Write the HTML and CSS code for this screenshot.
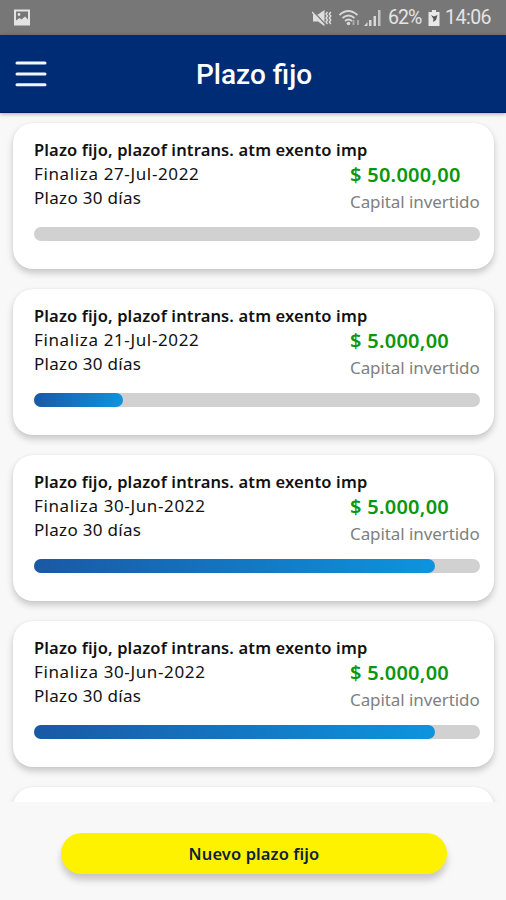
FILE: index.html
```html
<!DOCTYPE html>
<html lang="es">
<head>
<meta charset="utf-8">
<title>Plazo fijo</title>
<link rel="stylesheet" href="styles.css">
</head>
<body>
<div class="status">
  <svg class="photo" width="18" height="17" viewBox="0 0 18 17"><path fill="#e3e3e3" fill-rule="evenodd" d="M1 .5h16v16H1zM3 2.500v9l3.500-2.500 2 1.500 3.500-3 3 3v-8z"/><circle cx="6" cy="5.500" r="1.400" fill="#e3e3e3"/></svg>
  <div class="indicators">
    <svg class="mute" width="20" height="18" viewBox="0 0 20 18"><path fill="#dedede" d="M1 5.500h5L12.500 1v16L6 12.500H1z"/><path d="M1 2l12 13" stroke="#777" stroke-width="1.300"/><path d="M0 3l12 13" stroke="#dedede" stroke-width="1.400"/><path d="M15.500 3L14 5l1.500 2L14 9l1.500 2-1.500 2 1.500 2M18.800 3l-1.500 2 1.500 2-1.500 2 1.500 2-1.500 2 1.500 2" fill="none" stroke="#dedede" stroke-width="1.400"/></svg>
    <svg class="wifi" width="22" height="18" viewBox="0 0 22 18"><g fill="none" stroke="#d8d8d8" stroke-width="1.800"><path d="M.5 6q8.500-8 18 0M3.500 9q6-5 12 0M6 12q3.500-3 7 0"/></g><circle cx="9.500" cy="14.500" r="1.800" fill="#d8d8d8"/><path d="M14.500 11v5M19 11v5" stroke="#aaa" stroke-width="2" fill="none"/></svg>
    <svg class="signal" width="18" height="18" viewBox="0 0 18 18"><path fill="#d8d8d8" d="M0 17l3.500-4v4zM5 11h2.500v6H5zM9.500 7H12v10H9.500z"/><path fill="#c4c4c4" d="M14 1h2.500v16H14z"/></svg>
    <span class="percent">62%</span>
    <svg class="battery" width="12" height="18" viewBox="0 0 12 18"><path fill="#e8e8e8" d="M4 1h4v2h3.500v14H.5V3H4z"/><path fill="#555" d="M3 6l3 1.500L9.500 6 8 11l-3 2 .5-3z"/></svg>
    <span class="clock">14:06</span>
  </div>
</div>
<header class="bar">
  <svg class="menu" width="32" height="28" viewBox="0 0 32 28"><path d="M2 3h28M2 14h28M2 24.800h28" stroke="#f3f5fc" stroke-width="3" stroke-linecap="round"/></svg>
  <h1 class="title">Plazo fijo</h1>
</header>
<main class="list">
  <article class="card">
    <h2 class="name">Plazo fijo, plazof intrans. atm exento imp</h2>
    <div class="info">
      <div class="term"><p class="ends">Finaliza 27-Jul-2022</p><p class="days">Plazo 30 días</p></div>
      <div class="capital"><p class="amount">$ 50.000,00</p><p class="caption">Capital invertido</p></div>
    </div>
    <div class="track"></div>
  </article>
  <article class="card">
    <h2 class="name">Plazo fijo, plazof intrans. atm exento imp</h2>
    <div class="info">
      <div class="term"><p class="ends">Finaliza 21-Jul-2022</p><p class="days">Plazo 30 días</p></div>
      <div class="capital"><p class="amount">$ 5.000,00</p><p class="caption">Capital invertido</p></div>
    </div>
    <div class="track"><div class="fill" style="width:20%"></div></div>
  </article>
  <article class="card">
    <h2 class="name">Plazo fijo, plazof intrans. atm exento imp</h2>
    <div class="info">
      <div class="term"><p class="ends">Finaliza 30-Jun-2022</p><p class="days">Plazo 30 días</p></div>
      <div class="capital"><p class="amount">$ 5.000,00</p><p class="caption">Capital invertido</p></div>
    </div>
    <div class="track"><div class="fill" style="width:90%"></div></div>
  </article>
  <article class="card">
    <h2 class="name">Plazo fijo, plazof intrans. atm exento imp</h2>
    <div class="info">
      <div class="term"><p class="ends">Finaliza 30-Jun-2022</p><p class="days">Plazo 30 días</p></div>
      <div class="capital"><p class="amount">$ 5.000,00</p><p class="caption">Capital invertido</p></div>
    </div>
    <div class="track"><div class="fill" style="width:90%"></div></div>
  </article>
  <article class="card"></article>
</main>
<footer class="footer"><button class="new" type="button">Nuevo plazo fijo</button></footer>
</body>
</html>
```
FILE: styles.css
```css
* { box-sizing: border-box; margin: 0; padding: 0; }
body { height: 900px; display: flex; flex-direction: column; overflow: hidden; background: #f8f8f8; color: #111; font-family: "Noto Sans", sans-serif; }
svg { display: block; flex: none; }
.status { height: 35px; flex: none; display: flex; justify-content: space-between; align-items: center; padding: 0 14px 0 13px; background: #777; color: #e4e4e4; font: 19.500px Roboto, sans-serif; }
.indicators { display: flex; align-items: center; }
.wifi { margin-left: 7px; }
.signal { margin-left: 3px; }
.percent { margin-left: 6px; width: 35px; letter-spacing: -1px; }
.battery { margin-left: 5px; }
.clock { margin-left: 5px; width: 47px; letter-spacing: -.5px; }
.bar { position: relative; z-index: 1; height: 78px; flex: none; display: grid; grid-template-columns: 32px 1fr 32px; align-items: center; padding: 0 13px 0 15px; background: #002c76; border-bottom: 1px solid #001b64; box-shadow: 0 1px 4px #0005; }
.title { text-align: center; color: #fff; font: 500 28px Roboto, sans-serif; padding-top: 2px; }
.list { height: 689px; flex: none; overflow: hidden; display: flex; flex-direction: column; gap: 20px; padding: 10px 12px 0 13px; }
.card { height: 146px; flex: none; padding: 15px 14px 0 21px; border-radius: 20px; background: #fff; box-shadow: 0 4px 7px #0003, 0 0 2px #0001; }
.name { font-size: 16.500px; font-weight: 600; line-height: 24px; white-space: nowrap; letter-spacing: .14px; }
.info { display: flex; justify-content: space-between; height: 48px; font-size: 17px; line-height: 24px; white-space: nowrap; }
.ends { letter-spacing: .63px; }
.days { letter-spacing: .3px; }
.capital { width: 130px; }
.amount { color: #0a970e; font-size: 20px; font-weight: 600; line-height: 26px; letter-spacing: .27px; }
.caption { color: #808080; font-size: 17px; line-height: 27px; letter-spacing: -.08px; }
.track { height: 14px; margin-top: 17px; border-radius: 7px; background: #d1d1d1; }
.fill { height: 14px; border-radius: 7px; background: linear-gradient(100deg, #1a58a5, #0d94de); }
.footer { height: 98px; flex: none; padding: 31px 59px 0 61px; }
.new { display: block; width: 100%; height: 41px; border: 0; border-radius: 21px; background: #fff200; box-shadow: 0 6px 7px #0003; color: #0b2340; font: 600 16.500px/41px "Noto Sans", sans-serif; letter-spacing: .1px; }
```
